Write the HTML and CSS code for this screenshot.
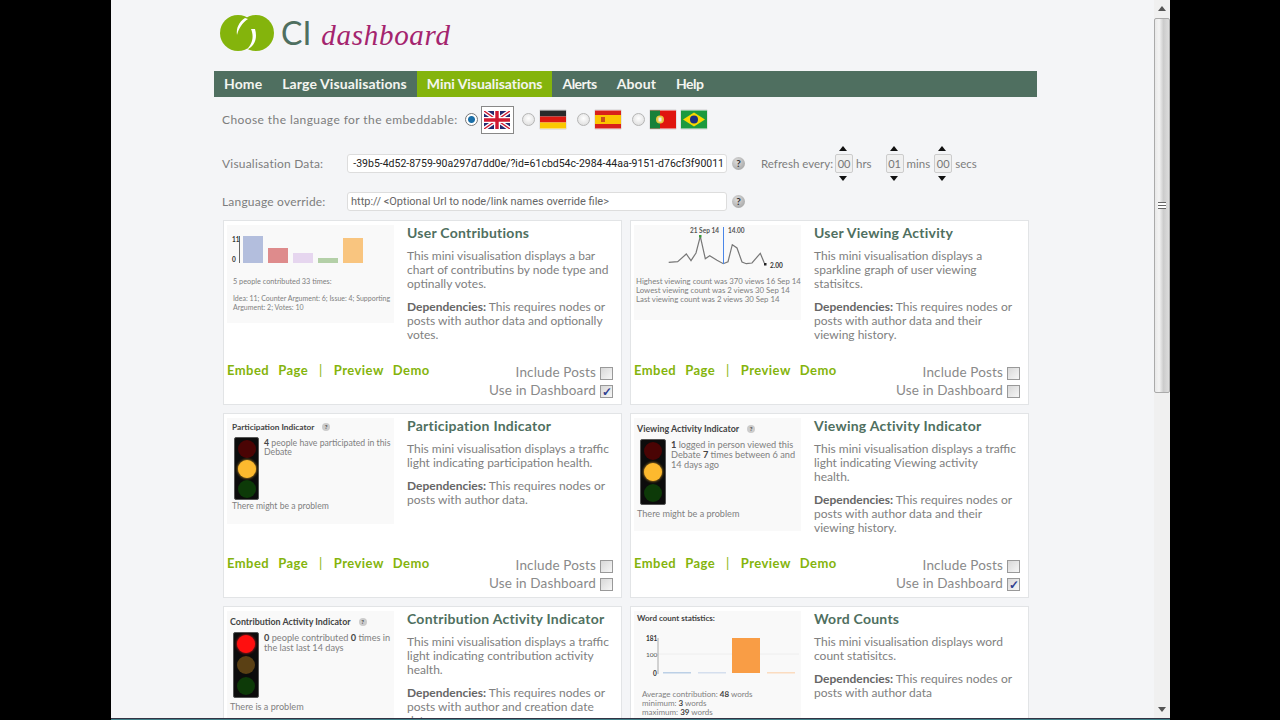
FILE: index.html
```html
<!DOCTYPE html>
<html lang="en">
<head>
<meta charset="utf-8">
<title>CI dashboard</title>
<link rel="stylesheet" href="styles.css">
</head>
<body>
<div class="screen">
  <div class="window">
  <div class="page">
    <div class="wrap">
      <header class="logo">
        <svg class="logo-mark" width="56" height="38" viewBox="0 0 56 38"><circle cx="19" cy="19" r="18" fill="#84b40c"/><circle cx="37" cy="19" r="18" fill="#84b40c"/><path d="M26 4C20 8 17 14 18 21C20 14 23 9 29 5Z" fill="#fff"/><path d="M32 15C35 22 34 30 27 36C35 33 39 25 36 15Z" fill="#fff"/></svg>
        <span class="logo-ci">CI</span>
        <span class="logo-dash">dashboard</span>
      </header>
      <nav class="nav">
        <a>Home</a><a>Large Visualisations</a><a class="active">Mini Visualisations</a><a class="tight">Alerts</a><a>About</a><a class="tight">Help</a>
      </nav>
      <div class="form">
        <div class="lang-row">
          <span class="label">Choose the language for the embeddable:</span>
          <span class="radio on"></span>
          <span class="flag-box">
            <svg class="flag" viewBox="0 0 26 18"><rect width="26" height="18" fill="#24296e"/><path d="M0 0L26 18M26 0L0 18" stroke="#fff" stroke-width="4"/><path d="M0 0L26 18M26 0L0 18" stroke="#d01830" stroke-width="1.4"/><path d="M13 0V18M0 9H26" stroke="#fff" stroke-width="6"/><path d="M13 0V18M0 9H26" stroke="#d01830" stroke-width="3.4"/></svg>
          </span>
          <span class="radio"></span>
          <svg class="flag" viewBox="0 0 26 18"><rect width="26" height="6" fill="#2a2a2a"/><rect y="6" width="26" height="6" fill="#dc1a12"/><rect y="12" width="26" height="6" fill="#fbc800"/></svg>
          <span class="radio"></span>
          <svg class="flag" viewBox="0 0 26 18"><rect width="26" height="18" fill="#d8201a"/><rect y="4.5" width="26" height="9" fill="#fbc400"/><rect x="6" y="6.5" width="4" height="5" fill="#c8501a"/></svg>
          <span class="radio"></span>
          <svg class="flag flag-pt" viewBox="0 0 26 18"><rect width="26" height="18" fill="#e0150f"/><rect width="10" height="18" fill="#18803a"/><circle cx="10" cy="9" r="4" fill="#e8c840"/><rect x="8.5" y="7" width="3" height="4" fill="#f0f0f0"/></svg>
          <svg class="flag" viewBox="0 0 26 18"><rect width="26" height="18" fill="#1c9a3e"/><path d="M13 2L24 9L13 16L2 9Z" fill="#f8d800"/><circle cx="13" cy="9" r="4" fill="#1c2f80"/></svg>
        </div>
        <div class="data-row">
          <span class="label field-label">Visualisation Data:</span>
          <div class="field"><span class="field-text">-39b5-4d52-8759-90a297d7dd0e/?id=61cbd54c-2984-44aa-9151-d76cf3f90011</span></div>
          <span class="help">?</span>
          <div class="refresh">
            <span class="label">Refresh every:</span>
            <span class="spin"><i class="up"></i><b>00</b><i class="down"></i></span><span class="unit u1">hrs</span>
            <span class="spin"><i class="up"></i><b>01</b><i class="down"></i></span><span class="unit">mins</span>
            <span class="spin"><i class="up"></i><b>00</b><i class="down"></i></span><span class="unit">secs</span>
          </div>
        </div>
        <div class="override-row">
          <span class="label field-label">Language override:</span>
          <div class="field"><span class="field-hint">http:// &lt;Optional Url to node/link names override file&gt;</span></div>
          <span class="help">?</span>
        </div>
      </div>
      <main class="cards">
        <article class="card">
          <div class="top">
            <div class="thumb t98">
              <div class="bars">
                <div class="axis"><b>11</b><b>0</b></div>
                <div class="bar" style="height:27px;background:#b3bedd"></div>
                <div class="bar" style="height:15px;background:#de8b8c"></div>
                <div class="bar" style="height:10px;background:#e6d6ef"></div>
                <div class="bar" style="height:5px;background:#b4d0a8"></div>
                <div class="bar" style="height:25px;background:#f9c57f"></div>
              </div>
              <p class="tiny c1">5 people contributed 33 times:</p>
              <p class="tiny c2">Idea: 11; Counter Argument: 6; Issue: 4; Supporting<br>Argument: 2; Votes: 10</p>
            </div>
            <div class="info">
              <h2>User Contributions</h2>
              <p>This mini visualisation displays a bar chart of contributins by node type and optinally votes.</p>
              <p><strong>Dependencies:</strong> This requires nodes or posts with author data and optionally votes.</p>
            </div>
          </div>
          <footer class="foot">
            <div class="links"><a>Embed</a><a>Page</a><span>|</span><a>Preview</a><a>Demo</a></div>
            <div class="opts"><label>Include Posts <span class="check"></span></label><label>Use in Dashboard <span class="check on">✓</span></label></div>
          </footer>
        </article>
        <article class="card">
          <div class="top">
            <div class="thumb t95">
              <svg class="spark" width="167" height="52" viewBox="0 0 167 52"><path d="M34.700 37.300L43.700 36.700L52.300 29L57 35.700L62 28L66.300 11.300L71.300 33.700L75.700 30.700L83 35.300L89.300 38.700L94 36.700L98.300 19.700L103 23L108 37L112.300 38.700L118 38L126.300 28.300L130.300 38" fill="none" stroke="#777" stroke-width="1.200"/><path d="M89.500 2V39" stroke="#4a86e8" stroke-width="1"/><rect x="65" y="10" width="2.500" height="2.500" fill="#3a9a3a"/><rect x="130" y="38" width="2.500" height="2.500" fill="#222"/><text x="56" y="8" class="spark-t">21 Sep 14</text><text x="94" y="8" class="spark-t">14.00</text><text x="136" y="43" class="spark-b">2.00</text></svg>
              <p class="tiny v1">Highest viewing count was 370 views 16 Sep 14</p>
              <p class="tiny v1">Lowest viewing count was 2 views 30 Sep 14</p>
              <p class="tiny v1">Last viewing count was 2 views 30 Sep 14</p>
            </div>
            <div class="info">
              <h2>User Viewing Activity</h2>
              <p>This mini visualisation displays a sparkline graph of user viewing statisitcs.</p>
              <p><strong>Dependencies:</strong> This requires nodes or posts with author data and their viewing history.</p>
            </div>
          </div>
          <footer class="foot">
            <div class="links"><a>Embed</a><a>Page</a><span>|</span><a>Preview</a><a>Demo</a></div>
            <div class="opts"><label>Include Posts <span class="check"></span></label><label>Use in Dashboard <span class="check"></span></label></div>
          </footer>
        </article>
        <article class="card">
          <div class="top">
            <div class="thumb t106 small">
              <div class="tl-title">Participation Indicator <span class="mini-help">?</span></div>
              <div class="tl-body">
                <div class="light"><i class="dr"></i><i class="ya"></i><i class="dg"></i></div>
                <p class="tiny tl-text"><b>4</b> people have participated in this Debate</p>
              </div>
              <p class="tiny tl-foot">There might be a problem</p>
            </div>
            <div class="info">
              <h2>Participation Indicator</h2>
              <p>This mini visualisation displays a traffic light indicating participation health.</p>
              <p><strong>Dependencies:</strong> This requires nodes or posts with author data.</p>
            </div>
          </div>
          <footer class="foot">
            <div class="links"><a>Embed</a><a>Page</a><span>|</span><a>Preview</a><a>Demo</a></div>
            <div class="opts"><label>Include Posts <span class="check"></span></label><label>Use in Dashboard <span class="check"></span></label></div>
          </footer>
        </article>
        <article class="card">
          <div class="top">
            <div class="thumb t113 big">
              <div class="tl-title">Viewing Activity Indicator <span class="mini-help">?</span></div>
              <div class="tl-body">
                <div class="light"><i class="dr"></i><i class="ya"></i><i class="dg"></i></div>
                <p class="tiny tl-text"><b>1</b> logged in person viewed this Debate <b>7</b> times between 6 and 14 days ago</p>
              </div>
              <p class="tiny tl-foot">There might be a problem</p>
            </div>
            <div class="info">
              <h2>Viewing Activity Indicator</h2>
              <p>This mini visualisation displays a traffic light indicating Viewing activity<br>health.</p>
              <p><strong>Dependencies:</strong> This requires nodes or posts with author data and their viewing history.</p>
            </div>
          </div>
          <footer class="foot">
            <div class="links"><a>Embed</a><a>Page</a><span>|</span><a>Preview</a><a>Demo</a></div>
            <div class="opts"><label>Include Posts <span class="check"></span></label><label>Use in Dashboard <span class="check on">✓</span></label></div>
          </footer>
        </article>
        <article class="card">
          <div class="top">
            <div class="thumb t113 big">
              <div class="tl-title">Contribution Activity Indicator <span class="mini-help">?</span></div>
              <div class="tl-body">
                <div class="light"><i class="br"></i><i class="dy"></i><i class="dg"></i></div>
                <p class="tiny tl-text"><b>0</b> people contributed <b>0</b> times in the last last 14 days</p>
              </div>
              <p class="tiny tl-foot">There is a problem</p>
            </div>
            <div class="info">
              <h2>Contribution Activity Indicator</h2>
              <p>This mini visualisation displays a traffic light indicating contribution activity health.</p>
              <p><strong>Dependencies:</strong> This requires nodes or posts with author and creation date data.</p>
            </div>
          </div>
        </article>
        <article class="card">
          <div class="top">
            <div class="thumb t113">
              <div class="wc-title">Word count statistics:</div>
              <svg class="wc" width="167" height="67" viewBox="0 0 167 67"><path d="M24 31H165" stroke="#eee"/><path d="M24 15V51" stroke="#aaa" stroke-width="1"/><rect x="29" y="49" width="28" height="1.500" fill="#bcd0e6"/><rect x="64" y="49" width="28" height="1.500" fill="#d5dfee"/><rect x="98" y="15" width="28" height="35" fill="#f99d45"/><rect x="133" y="49" width="28" height="1.500" fill="#fbdcc0"/><text x="12" y="18" class="spark-b">181</text><text x="12" y="33.500" class="spark-n">100</text><text x="19" y="52.500" class="spark-b">0</text></svg>
              <p class="tiny wc-line">Average contribution: <b>48</b> words</p>
              <p class="tiny wc-line">minimum: <b>3</b> words</p>
              <p class="tiny wc-line">maximum: <b>39</b> words</p>
            </div>
            <div class="info">
              <h2>Word Counts</h2>
              <p>This mini visualisation displays word count statisitcs.</p>
              <p><strong>Dependencies:</strong> This requires nodes or posts with author data</p>
            </div>
          </div>
        </article>
      </main>
    </div>
  </div>
  <div class="scrollbar">
    <span class="sb-up"></span>
    <div class="sb-thumb"><span class="grip"></span></div>
    <span class="sb-down"></span>
  </div>
  </div>
  <div class="taskbar"></div>
</div>
</body>
</html>
```
FILE: styles.css
```css
* { box-sizing: border-box; }
html, body { margin: 0; height: 100%; overflow: hidden; }
body { background: #000; font-family: "Lato", "Open Sans", sans-serif; color: #777; }
.screen { width: 1059px; height: 720px; margin-left: 111px; display: flex; flex-direction: column; overflow: hidden; }
.window { height: 718px; display: flex; overflow: hidden; }
.taskbar { height: 2px; background: #3f7f88; border-top: 1px solid #334; }
.page { flex: 1; background: #f4f5f7; overflow: hidden; padding-left: 103px; }
.wrap { width: 823px; }

.logo { height: 71px; padding: 14px 0 0 5px; display: flex; align-items: flex-start; }
.logo-mark { display: block; }
.logo-ci { font-size: 32px; line-height: 38px; color: #4f6f60; margin-left: 6px; }
.logo-dash { font-family: "Liberation Serif", serif; font-style: italic; font-size: 29px; line-height: 42px; color: #a4246e; margin-left: 10px; letter-spacing: .7px; }

.nav { height: 26px; background: #4f6f60; display: flex; }
.nav a { padding: 0 10px; font-size: 14px; line-height: 26px; font-weight: 700; color: #f4f5f0; letter-spacing: .1px; }
.nav a.active { background: #84b40c; letter-spacing: -.05px; }
.nav a.tight { letter-spacing: -.5px; }

.form { padding-left: 8px; }
.lang-row { height: 45px; display: flex; align-items: center; }
.label { font-size: 12px; color: #7d7d7d; letter-spacing: .42px; }
.lang-row .label { margin-right: 7px; }
.radio { width: 13px; height: 13px; border-radius: 50%; border: 1px solid #b5b5b5; background: radial-gradient(circle at 50% 40%, #fff, #d8d8d8); flex: none; margin-right: 5px; }
.radio.on { background: radial-gradient(circle, #1b6fa8 0 3px, #fff 4px); border-color: #777; margin-right: 3px; }
.flag { width: 26px; height: 19px; display: block; flex: none; margin-right: 11px; box-shadow: 0 0 1px #888; }
.flag-box { width: 33px; height: 28px; border: 1px solid #888; background: #fff; display: flex; align-items: center; justify-content: center; margin-right: 8px; flex: none; }
.flag-box .flag { margin: 0; height: 18px; box-shadow: none; }
.radio + .flag-pt { margin-right: 5px; }

.data-row { height: 42px; display: flex; align-items: center; }
.override-row { height: 36px; display: flex; align-items: center; padding-bottom: 2px; }
.field-label { width: 125px; flex: none; letter-spacing: .2px; }
.field { width: 380px; height: 19px; background: #fff; border: 1px solid #ddd; border-radius: 3px; overflow: hidden; display: flex; justify-content: flex-end; align-items: center; padding: 0 2px; flex: none; font-family: "Roboto", sans-serif; font-size: 10.500px; color: #222; white-space: nowrap; }
.field-text { flex: none; }
.field-hint { flex: none; color: #666; margin-right: auto; padding-left: 1px; font-size: 11px; }
.help { width: 13px; height: 13px; margin-left: 5px; border-radius: 50%; background: radial-gradient(circle at 40% 35%, #ddd, #999); color: #333; font-size: 10px; font-weight: 700; text-align: center; line-height: 13px; flex: none; }
.refresh { display: flex; align-items: center; margin-left: 16px; }
.refresh .label { margin-right: 2px; letter-spacing: 0; font-size: 11.500px; }
.spin { width: 18px; height: 19px; border: 1px solid #ccc; border-radius: 2px; background: #f0f0f0; position: relative; flex: none; }
.spin b { display: block; text-align: center; font-weight: 400; font-size: 11px; line-height: 18px; color: #777; }
.spin i { position: absolute; left: 3px; border-left: 4.500px solid transparent; border-right: 4.500px solid transparent; }
.spin .up { top: -9px; border-bottom: 5px solid #111; }
.spin .down { bottom: -9px; border-top: 5px solid #111; }
.unit { font-size: 11.500px; color: #7d7d7d; margin: 0 4px 0 3px; }
.u1 { margin-right: 14px; }

.cards { display: grid; grid-template-columns: 399px 399px; gap: 8px; padding: 0 0 0 9px; }
.card { height: 185px; background: #fff; border: 1px solid #e2e4e6; padding: 4px 3px; position: relative; }
.top { display: flex; gap: 13px; align-items: flex-start; }
.thumb { width: 167px; background: #f9f9f9; flex: none; overflow: hidden; }
.t98 { height: 98px; }
.t95 { height: 95px; }
.t106 { height: 106px; }
.t113 { height: 113px; }
.info { flex: 1; }
.info h2 { margin: 0 0 8px; font-size: 14px; line-height: 16px; font-weight: 700; color: #4f6f60; letter-spacing: .25px; }
.info p { margin: 0 0 9px; font-size: 12px; line-height: 14px; color: #808080; }
.info strong { color: #666; }

.foot { position: absolute; left: 3px; right: 8px; bottom: 7px; display: flex; justify-content: space-between; align-items: flex-start; }
.links { display: flex; gap: 9px; margin-top: -4px; font-size: 13px; font-weight: 700; color: #84b40c; letter-spacing: .45px; line-height: 16px; padding-top: 1px; }
.links span { font-weight: 400; margin: 0 2px; }
.opts { display: flex; flex-direction: column; align-items: flex-end; gap: 4px; font-size: 13.500px; line-height: 14px; color: #8a8a8a; letter-spacing: .15px; }
.opts label { display: flex; align-items: center; gap: 4px; height: 14px; }
.check { width: 13px; height: 13px; border: 1px solid #999; background: linear-gradient(135deg, #d8d8d8, #f6f6f6); display: block; transform: translateY(1px); font-size: 12px; line-height: 11px; color: #2e3f90; text-align: center; font-weight: 700; letter-spacing: 0; }

.bars { height: 33px; display: flex; align-items: flex-end; gap: 5px; margin-top: 5px; }
.axis { width: 13px; height: 27px; border-right: 1px solid #666; display: flex; flex-direction: column; justify-content: space-between; font-size: 6.500px; line-height: 7px; color: #333; margin-right: -2px; padding-left: 5px; }
.bars .bar { width: 20px; }
.tiny { margin: 0; font-size: 7.300px; line-height: 9px; color: #808080; }
.tiny b { color: #444; }
.c1 { padding: 14px 0 0 6px; }
.c2 { padding: 8px 0 0 6px; white-space: nowrap; font-size: 7px; }
.v1 { padding-left: 2px; font-size: 7.800px; white-space: nowrap; }
.spark { display: block; }
.spark-t { font: 700 6.500px "Lato", sans-serif; fill: #555; }
.spark-b { font: 700 6.500px "Lato", sans-serif; fill: #333; }
.spark-n { font: 6.500px "Lato", sans-serif; fill: #555; }
.tl-title { font-weight: 700; color: #444; line-height: 10px; white-space: nowrap; }
.mini-help { display: inline-block; width: 8px; height: 8px; border-radius: 50%; background: #ccc; text-align: center; line-height: 8px; font-size: 6px; margin-left: 6px; vertical-align: 1px; }
.tl-body { display: flex; gap: 5px; padding-top: 5px; }
.light { background: #0c0c0c; border: 1px solid #555; border-radius: 2px; flex: none; display: flex; flex-direction: column; align-items: center; justify-content: center; }
.light i { width: 18px; height: 18px; border-radius: 50%; display: block; }
.dr { background: #4a0404; }
.ya { background: #fdb92e; box-shadow: 0 0 3px #fdb92e; }
.dg { background: #0d3a08; }
.br { background: #ff0f0f; box-shadow: 0 0 3px #ff2020; }
.dy { background: #5a4014; }
.tl-text { flex: 1; padding-top: 1px; }
.small .tl-title { font-size: 8.300px; padding: 4px 0 0 5px; }
.small .tl-body { padding-left: 7px; }
.small .light { width: 25px; height: 63px; gap: 2px; }
.small .tl-text { font-size: 8.700px; line-height: 9.300px; }
.small .tl-foot { font-size: 8.600px; padding: 2px 0 0 5px; }
.big .tl-title { font-size: 8.900px; padding: 6px 0 0 3px; }
.big .tl-body { padding-left: 6px; }
.big .light { width: 26px; height: 66px; gap: 3px; }
.big .tl-text { font-size: 9.200px; line-height: 9.800px; }
.big .tl-foot { font-size: 9.100px; padding: 4px 0 0 3px; }
.wc-title { font-size: 8px; font-weight: 700; color: #444; line-height: 10px; padding: 2px 0 0 3px; }
.wc { display: block; }
.wc-line { padding-left: 8px; font-size: 8px; line-height: 9.200px; }

.scrollbar { width: 16px; flex: none; background: #f0f0f0; display: flex; flex-direction: column; align-items: center; position: relative; }
.sb-up { border-left: 4px solid transparent; border-right: 4px solid transparent; border-bottom: 5px solid #555; margin-top: 6px; }
.sb-thumb { width: 16px; height: 375px; margin-top: 7px; border: 1px solid #aaa; border-radius: 2px; background: linear-gradient(90deg, #e8e8e8, #f4f4f4 30%, #ccc 60%, #ddd); display: flex; align-items: center; justify-content: center; }
.grip { width: 8px; height: 7px; border-top: 1px solid #666; border-bottom: 1px solid #666; background: linear-gradient(#fff 2px, #666 2px, #666 3px, #fff 3px); }
.sb-down { position: absolute; bottom: 6px; border-left: 4px solid transparent; border-right: 4px solid transparent; border-top: 5px solid #555; }
```
